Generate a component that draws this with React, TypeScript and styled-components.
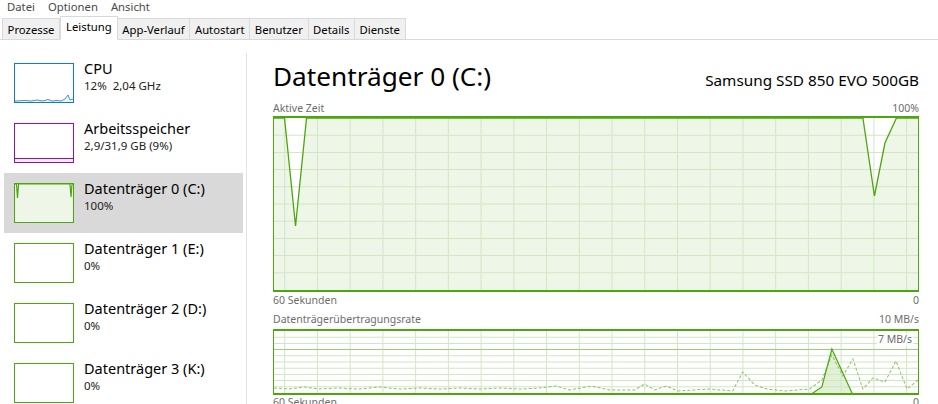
import React from "react";
import styled, { createGlobalStyle } from "styled-components";

const GREEN = "#4da60c";
const FILL = "#eef6e8";
const GRID = "#d2e6c4";

const Global = createGlobalStyle`
  html, body { margin: 0; padding: 0; background: #fff; }
  body { width: 938px; height: 404px; overflow: hidden; font-family: "Noto Sans", "Open Sans", sans-serif; color: #000; }
`;

const Page = styled.div`
  width: 938px;
  height: 404px;
  display: flex;
  flex-direction: column;
  overflow: hidden;
`;

const MenuBar = styled.div`
  height: 14px;
  flex: none;
  display: flex;
  align-items: center;
  gap: 13px;
  padding-left: 7px;
  font-size: 11.3px;
  color: #4a4a4a;
  line-height: 14px;
`;

const MenuItem = styled.span``;

const TabBar = styled.div`
  height: 26px;
  flex: none;
  box-sizing: border-box;
  display: flex;
  align-items: flex-end;
  padding-left: 2px;
  border-bottom: 1px solid #d9d9d9;
`;

const Tab = styled.div<{ $active?: boolean }>`
  box-sizing: border-box;
  height: ${(p) => (p.$active ? "24px" : "21px")};
  padding: 0 ${(p) => (p.$active ? "5px" : "4.6px")};
  margin-bottom: ${(p) => (p.$active ? "-1px" : "0")};
  background: ${(p) => (p.$active ? "#fff" : "#f0f0f0")};
  border: 1px solid #d9d9d9;
  border-bottom: ${(p) => (p.$active ? "1px solid #fff" : "none")};
  border-left: ${(p) => (p.$active ? "1px solid #d9d9d9" : "none")};
  &:first-child { border-left: 1px solid #d9d9d9; }
  font-size: 11.3px;
  display: flex;
  align-items: ${(p) => (p.$active ? "flex-start" : "center")};
  padding-top: ${(p) => (p.$active ? "2px" : "0")};
  color: #000;
  white-space: nowrap;
`;

const Body = styled.div`
  flex: 1;
  display: flex;
  min-height: 0;
  overflow: hidden;
`;

const Sidebar = styled.div`
  width: 247px;
  flex: none;
  margin-top: 13px;
  padding: 0 3px 0 4px;
  box-sizing: border-box;
  border-right: 1px solid #e3e3e3;
  display: flex;
  flex-direction: column;
`;

const Item = styled.div<{ $selected?: boolean }>`
  height: 60px;
  flex: none;
  display: flex;
  align-items: flex-start;
  gap: 10px;
  padding: 10px 0 0 10px;
  box-sizing: border-box;
  background: ${(p) => (p.$selected ? "#d9d9d9" : "transparent")};
`;

const Thumb = styled.div<{ $color: string; $fill?: string }>`
  width: 60px;
  height: 40px;
  flex: none;
  box-sizing: border-box;
  border: 1px solid ${(p) => p.$color};
  background: ${(p) => p.$fill || "#fff"};
  position: relative;
  overflow: hidden;
  svg { display: block; }
`;

const ItemText = styled.div`
  display: flex;
  flex-direction: column;
  margin-top: -4px;
`;

const ItemTitle = styled.div`
  font-size: 14.5px;
  line-height: 19px;
  color: #000;
  white-space: nowrap;
`;

const ItemSub = styled.div`
  font-size: 11.5px;
  line-height: 15px;
  color: #222;
  white-space: nowrap;
`;

const Main = styled.div`
  flex: 1;
  padding: 0 19px 0 26px;
  display: flex;
  flex-direction: column;
  min-width: 0;
  min-height: 0;
  overflow: hidden;
`;

const Header = styled.div`
  flex: none;
  display: flex;
  justify-content: space-between;
  align-items: baseline;
  height: 40px;
  margin-top: 21px;
`;

const Title = styled.div`
  font-size: 26.2px;
  line-height: 30px;
  color: #000;
`;

const Model = styled.div`
  font-size: 15.3px;
  color: #000;
`;

const LabelRow = styled.div<{ $h?: number }>`
  display: flex;
  justify-content: space-between;
  font-size: 10.5px;
  line-height: ${(p) => p.$h || 15}px;
  color: #6d6d6d;
  height: ${(p) => p.$h || 15}px;
  flex: none;
`;

const Chart = styled.div<{ $h: number }>`
  height: ${(p) => p.$h}px;
  flex: none;
  box-sizing: border-box;
  border: 2px solid ${GREEN};
  border-left-width: 1px;
  border-right-width: 1px;
  background: #fff;
  position: relative;
  svg { display: block; width: 100%; height: 100%; }
`;

const ScaleLabel = styled.span`
  position: absolute;
  right: 5px;
  top: 2px;
  font-size: 10.5px;
  color: #6d6d6d;
  background: #fff;
  line-height: 13px;
  padding: 0 1px;
`;

const W = 643;

function Grid({ h, rows }: { h: number; rows: number }) {
  const vs: number[] = [];
  for (let k = 0; k < 20; k++) {
    const x = 10.7 + 32.68 * k;
    if (x < W) vs.push(x);
  }
  const hs: number[] = [];
  for (let k = 1; k < rows; k++) hs.push((h * k) / rows);
  return (
    <g stroke={GRID} strokeWidth={1}>
      {vs.map((x) => (
        <line key={"v" + x} x1={x} x2={x} y1={0} y2={h} />
      ))}
      {hs.map((y) => (
        <line key={"h" + y} x1={0} x2={W} y1={y} y2={y} />
      ))}
    </g>
  );
}

const toPath = (pts: number[][]) => pts.map((p, i) => (i ? "L" : "M") + p[0] + " " + p[1]).join(" ");

function ActiveChart() {
  const H = 172;
  const ox = 275;
  const oy = 117;
  const raw = [
    [275, 117],
    [285.5, 117],
    [296.5, 225],
    [307.5, 117],
    [863, 117],
    [874.5, 195],
    [885, 142],
    [896.5, 117],
    [918, 117],
  ];
  const pts = raw.map(([x, y]) => [x - ox, y - oy]);
  const area = toPath(pts) + ` L ${W} ${H} L 0 ${H} Z`;
  return (
    <Chart $h={176}>
      <svg viewBox={`0 0 ${W} ${H}`} preserveAspectRatio="none">
        <path d={area} fill={FILL} />
        <Grid h={H} rows={10} />
        <path d={toPath(pts)} fill="none" stroke={GREEN} strokeWidth={1.3} />
      </svg>
    </Chart>
  );
}

function RateChart() {
  const H = 62;
  const ox = 275;
  const oy = 330;
  const dashedRaw = [
    [275, 387], [290, 388], [305, 386], [320, 388], [340, 387], [360, 388], [380, 386],
    [400, 388], [420, 387], [440, 388], [460, 387], [480, 388], [500, 387], [520, 388],
    [540, 387], [557, 385], [570, 389], [592, 385], [610, 389], [635, 389], [645, 383],
    [655, 389], [667, 385], [678, 390], [710, 388], [733, 390], [743, 371], [755, 384],
    [767, 388], [785, 390], [810, 388], [822, 379], [832, 354], [843, 375], [853, 358],
    [863, 388], [873, 377], [885, 381], [896, 360], [907, 388], [918, 379],
  ];
  const solidRaw = [
    [810, 394], [822, 386], [832, 348], [853, 394],
  ];
  const dashed = dashedRaw.map(([x, y]) => [x - ox, y - oy]);
  const solid = solidRaw.map(([x, y]) => [x - ox, y - oy]);
  const scaleY = H * 0.3;
  return (
    <Chart $h={66}>
      <svg viewBox={`0 0 ${W} ${H}`} preserveAspectRatio="none">
        <path d={toPath(solid) + " Z"} fill="#e3f0d8" />
        <Grid h={H} rows={10} />
        <line x1={0} x2={W} y1={scaleY} y2={scaleY} stroke="#9ccc7a" strokeWidth={1} />
        <path d={toPath(dashed)} fill="none" stroke="#8cc55f" strokeWidth={1} strokeDasharray="3 2" />
        <path d={toPath(solid)} fill="none" stroke={GREEN} strokeWidth={1.2} />
      </svg>
      <ScaleLabel>7 MB/s</ScaleLabel>
    </Chart>
  );
}

function CpuThumb() {
  const pts = [
    [0, 37], [10, 36.5], [16, 37], [22, 36], [28, 37], [33, 35.5], [37, 37], [42, 36.5],
    [46, 37], [50, 35], [53, 31], [55, 36], [58, 35], [60, 37],
  ];
  return (
    <Thumb $color="#117dbb">
      <svg width="58" height="38" viewBox="0 0 58 38">
        <path d={toPath(pts) + " L 58 38 L 0 38 Z"} fill="#f1f6fa" />
        <path d={toPath(pts)} fill="none" stroke="#117dbb" strokeWidth={0.8} />
      </svg>
    </Thumb>
  );
}

function MemThumb() {
  return (
    <Thumb $color="#8b12ae">
      <svg width="58" height="38" viewBox="0 0 58 38">
        <rect x="0" y="34.5" width="58" height="4" fill="#f4e8f7" />
        <line x1="0" x2="58" y1="34.5" y2="34.5" stroke="#8b12ae" strokeWidth={1} />
      </svg>
    </Thumb>
  );
}

function Disk0Thumb() {
  const pts = [
    [0, 0], [1.5, 0], [2.5, 14], [3.5, 0], [55, 0], [56, 13], [57, 0], [58, 0],
  ];
  return (
    <Thumb $color={GREEN}>
      <svg width="58" height="38" viewBox="0 0 58 38">
        <path d={toPath(pts) + " L 58 38 L 0 38 Z"} fill={FILL} />
        <path d={toPath(pts)} fill="none" stroke={GREEN} strokeWidth={1.2} />
      </svg>
    </Thumb>
  );
}

const disks = [
  { name: "Datenträger 1 (E:)", val: "0%" },
  { name: "Datenträger 2 (D:)", val: "0%" },
  { name: "Datenträger 3 (K:)", val: "0%" },
];

export default function App() {
  return (
    <Page>
      <Global />
      <MenuBar>
        <MenuItem>Datei</MenuItem>
        <MenuItem>Optionen</MenuItem>
        <MenuItem>Ansicht</MenuItem>
      </MenuBar>
      <TabBar>
        <Tab>Prozesse</Tab>
        <Tab $active>Leistung</Tab>
        <Tab>App-Verlauf</Tab>
        <Tab>Autostart</Tab>
        <Tab>Benutzer</Tab>
        <Tab>Details</Tab>
        <Tab>Dienste</Tab>
      </TabBar>
      <Body>
        <Sidebar>
          <Item>
            <CpuThumb />
            <ItemText>
              <ItemTitle>CPU</ItemTitle>
              <ItemSub>12%&nbsp; 2,04 GHz</ItemSub>
            </ItemText>
          </Item>
          <Item>
            <MemThumb />
            <ItemText>
              <ItemTitle>Arbeitsspeicher</ItemTitle>
              <ItemSub>2,9/31,9 GB (9%)</ItemSub>
            </ItemText>
          </Item>
          <Item $selected>
            <Disk0Thumb />
            <ItemText>
              <ItemTitle>Datenträger 0 (C:)</ItemTitle>
              <ItemSub>100%</ItemSub>
            </ItemText>
          </Item>
          {disks.map((d) => (
            <Item key={d.name}>
              <Thumb $color={GREEN} />
              <ItemText>
                <ItemTitle>{d.name}</ItemTitle>
                <ItemSub>{d.val}</ItemSub>
              </ItemText>
            </Item>
          ))}
        </Sidebar>
        <Main>
          <Header>
            <Title>Datenträger 0 (C:)</Title>
            <Model>Samsung SSD 850 EVO 500GB</Model>
          </Header>
          <LabelRow>
            <span>Aktive Zeit</span>
            <span>100%</span>
          </LabelRow>
          <ActiveChart />
          <LabelRow $h={17}>
            <span>60 Sekunden</span>
            <span>0</span>
          </LabelRow>
          <LabelRow $h={20}>
            <span>Datenträgerübertragungsrate</span>
            <span>10 MB/s</span>
          </LabelRow>
          <RateChart />
          <LabelRow>
            <span>60 Sekunden</span>
            <span>0</span>
          </LabelRow>
        </Main>
      </Body>
    </Page>
  );
}
